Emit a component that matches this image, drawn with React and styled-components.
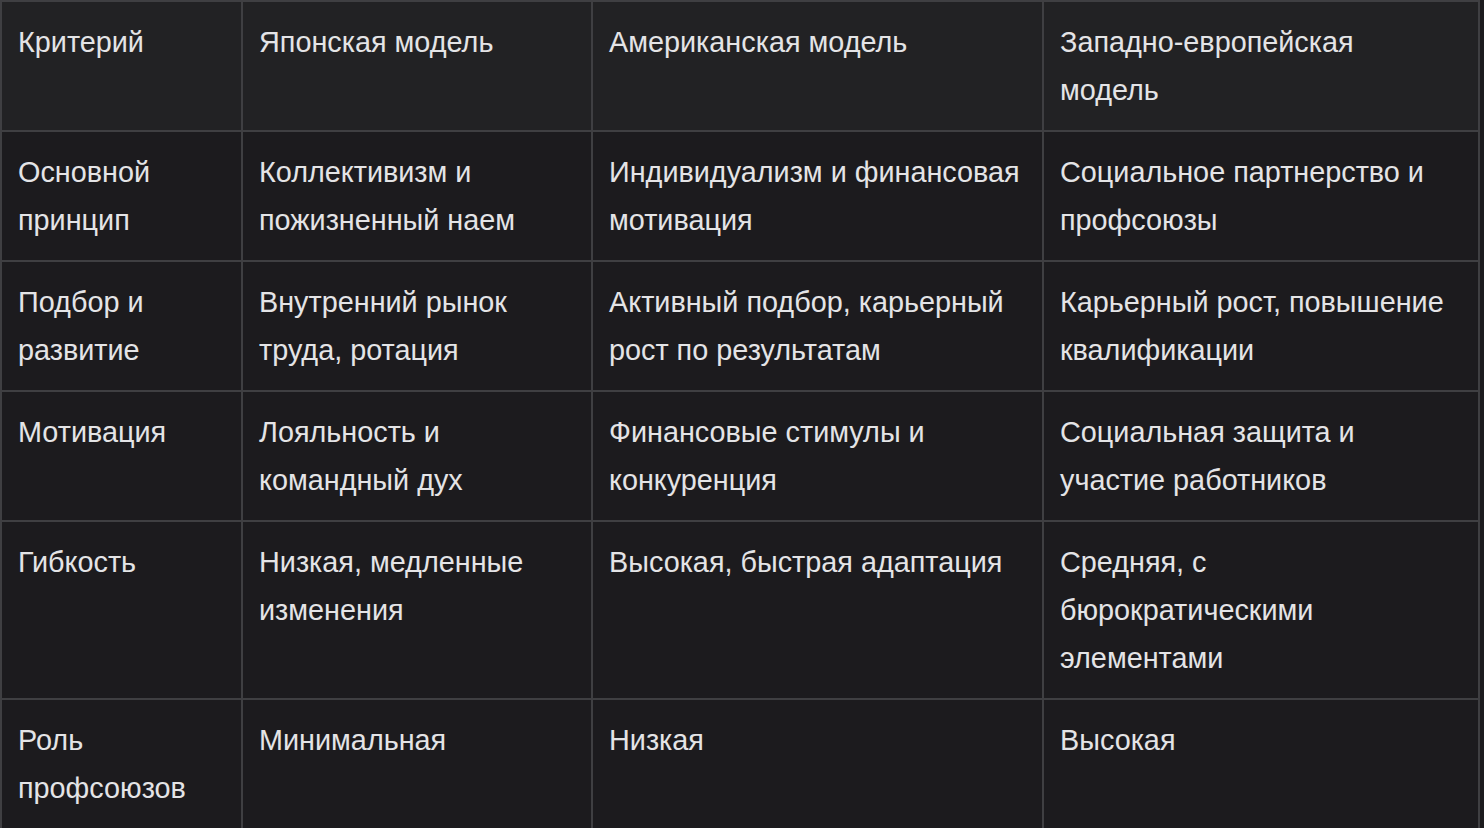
import React from "react";
import styled, { createGlobalStyle } from "styled-components";

const Global = createGlobalStyle`
  html, body {
    margin: 0;
    padding: 0;
    background: #1c1b1e;
  }
  body {
    font-family: "Liberation Sans", Arial, sans-serif;
  }
`;

const Table = styled.div`
  display: grid;
  grid-template-columns: 239px 348px 449px 434px;
  gap: 2px;
  padding: 2px;
  width: 1480px;
  box-sizing: border-box;
  background: #3f3f42;
`;

const Cell = styled.div`
  background: ${(p) => (p.$head ? "#222224" : "#1c1b1e")};
  color: #e4e4e6;
  font-size: 28.8px;
  line-height: 48px;
  padding: ${(p) => (p.$head ? "16px 28px 16px 16px" : "16px")};
  font-weight: 400;
`;

const header = ["Критерий", "Японская модель", "Американская модель", "Западно-европейская модель"];

const rows = [
  ["Основной принцип", "Коллективизм и пожизненный наем", "Индивидуализм и финансовая мотивация", "Социальное партнерство и профсоюзы"],
  ["Подбор и развитие", "Внутренний рынок труда, ротация", "Активный подбор, карьерный рост по результатам", "Карьерный рост, повышение квалификации"],
  ["Мотивация", "Лояльность и командный дух", "Финансовые стимулы и конкуренция", "Социальная защита и участие работников"],
  ["Гибкость", "Низкая, медленные изменения", "Высокая, быстрая адаптация", "Средняя, с бюрократическими элементами"],
  ["Роль профсоюзов", "Минимальная", "Низкая", "Высокая"],
];

export default function App() {
  return (
    <>
      <Global />
      <Table>
        {header.map((h) => (
          <Cell key={h} $head>
            {h}
          </Cell>
        ))}
        {rows.map((r, i) =>
          r.map((c, j) => <Cell key={i + "-" + j}>{c}</Cell>)
        )}
      </Table>
    </>
  );
}
